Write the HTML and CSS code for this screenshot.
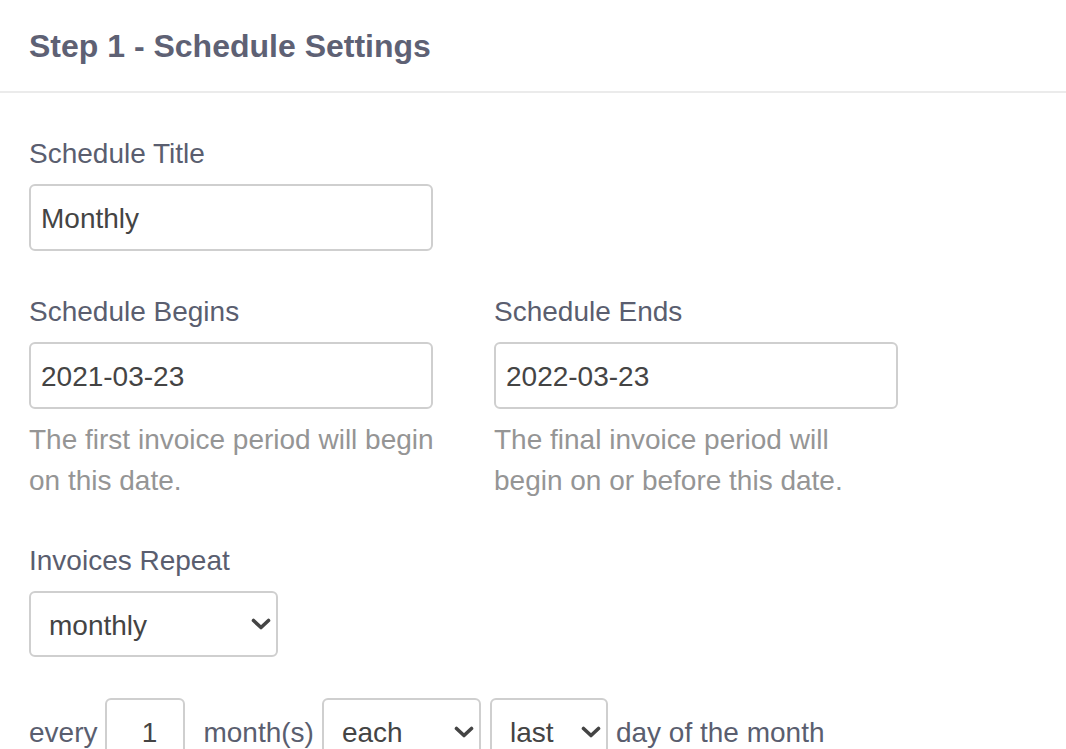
FILE: index.html
```html
<!DOCTYPE html>
<html lang="en">
<head>
<meta charset="utf-8">
<title>Step 1 - Schedule Settings</title>
<link rel="stylesheet" href="styles.css">
</head>
<body>
<div class="panel">
  <div class="panel-heading">
    <h3 class="panel-title">Step 1 - Schedule Settings</h3>
  </div>
  <div class="panel-body">
    <div class="form-group group-title">
      <label class="control-label" for="title">Schedule Title</label>
      <input id="title" class="form-control input-title" type="text" value="Monthly">
    </div>

    <div class="row group-dates">
      <div class="col">
        <label class="control-label" for="begins">Schedule Begins</label>
        <input id="begins" class="form-control input-date" type="text" value="2021-03-23">
        <p class="help-block">The first invoice period will begin on this date.</p>
      </div>
      <div class="col">
        <label class="control-label" for="ends">Schedule Ends</label>
        <input id="ends" class="form-control input-date" type="text" value="2022-03-23">
        <p class="help-block">The final invoice period will begin on or before this date.</p>
      </div>
    </div>

    <div class="form-group group-repeat">
      <label class="control-label" for="repeat">Invoices Repeat</label>
      <span class="select-wrap select-repeat">
        <select id="repeat" class="form-control">
          <option selected>monthly</option>
          <option>weekly</option>
          <option>yearly</option>
        </select>
        <svg class="chev" viewBox="0 0 20 12" aria-hidden="true"><path d="M2.5 2.5 L10 9.5 L17.5 2.5" fill="none" stroke="#444" stroke-width="3.6" stroke-linecap="round" stroke-linejoin="round"/></svg>
      </span>
    </div>

    <div class="inline-row">
      <span class="inline-text">every</span>
      <input class="form-control input-num" type="text" value="1">
      <span class="inline-text months">month(s)</span>
      <span class="select-wrap select-each">
        <select class="form-control">
          <option selected>each</option>
          <option>on the</option>
        </select>
        <svg class="chev" viewBox="0 0 20 12" aria-hidden="true"><path d="M2.5 2.5 L10 9.5 L17.5 2.5" fill="none" stroke="#444" stroke-width="3.6" stroke-linecap="round" stroke-linejoin="round"/></svg>
      </span>
      <span class="select-wrap select-last">
        <select class="form-control">
          <option selected>last</option>
          <option>first</option>
        </select>
        <svg class="chev" viewBox="0 0 20 12" aria-hidden="true"><path d="M2.5 2.5 L10 9.5 L17.5 2.5" fill="none" stroke="#444" stroke-width="3.6" stroke-linecap="round" stroke-linejoin="round"/></svg>
      </span>
      <span class="inline-text">day of the month</span>
    </div>
  </div>
</div>
</body>
</html>
```

FILE: styles.css
```css
* { box-sizing: border-box; }

html, body {
  margin: 0;
  padding: 0;
  background: #ffffff;
  overflow: hidden;
}

body {
  font-family: "Liberation Sans", Arial, Helvetica, sans-serif;
  font-size: 28px;
  color: #5c6070;
  width: 1066px;
  height: 749px;
}

.panel-heading {
  height: 93px;
  padding: 0 29px;
  border-bottom: 2px solid #ebebeb;
  display: flex;
  align-items: center;
}

.panel-title {
  margin: 0;
  font-size: 32px;
  font-weight: bold;
  color: #5e6174;
  line-height: 40px;
}

.panel-body {
  padding: 41px 29px 0 29px;
}

.control-label {
  display: block;
  line-height: 40px;
  color: #5a5e6f;
  margin-bottom: 10px;
}

.form-control {
  font-family: inherit;
  font-size: 28px;
  color: #444444;
  background: #ffffff;
  border: 2px solid #cfcfcf;
  border-radius: 6px;
  height: 67px;
  margin: 0;
  outline: none;
}

.input-title,
.input-date {
  display: block;
  width: 404px;
  padding: 0 10px;
}

.input-title,
.input-date {
  padding-top: 2px;
}

.group-title {
  margin-bottom: 41px;
}

.row {
  display: grid;
  grid-template-columns: 407px 407px;
  column-gap: 58px;
}

.help-block {
  margin: 10px 0 0 0;
  line-height: 41px;
  color: #959595;
}

.group-dates {
  margin-bottom: 40px;
}

.group-repeat {
  margin-bottom: 41px;
}

.group-repeat .control-label {
  margin-bottom: 10px;
}

.select-wrap {
  position: relative;
  display: inline-block;
}

.select-wrap select {
  -webkit-appearance: none;
  appearance: none;
  display: block;
  padding: 2px 40px 0 18px;
  height: 66px;
}

.select-repeat select { width: 249px; }
.select-each select { width: 159px; height: 67px; }
.select-last select { width: 118px; height: 67px; }

.chev {
  position: absolute;
  top: 50%;
  margin-top: -6px;
  width: 20px;
  height: 12px;
  pointer-events: none;
}

.select-repeat .chev { right: 7px; }
.select-each .chev { right: 7px; }
.select-last .chev { right: 7px; }

.inline-row {
  display: flex;
  align-items: center;
  gap: 8px;
}

.inline-text {
  line-height: 40px;
  color: #5a5e6f;
  padding-top: 2px;
}

.months {
  margin-left: 10px;
}

.select-last {
  margin-left: 1px;
}

.input-num {
  width: 80px;
  text-align: center;
  padding: 2px 0 0 8px;
}
```
